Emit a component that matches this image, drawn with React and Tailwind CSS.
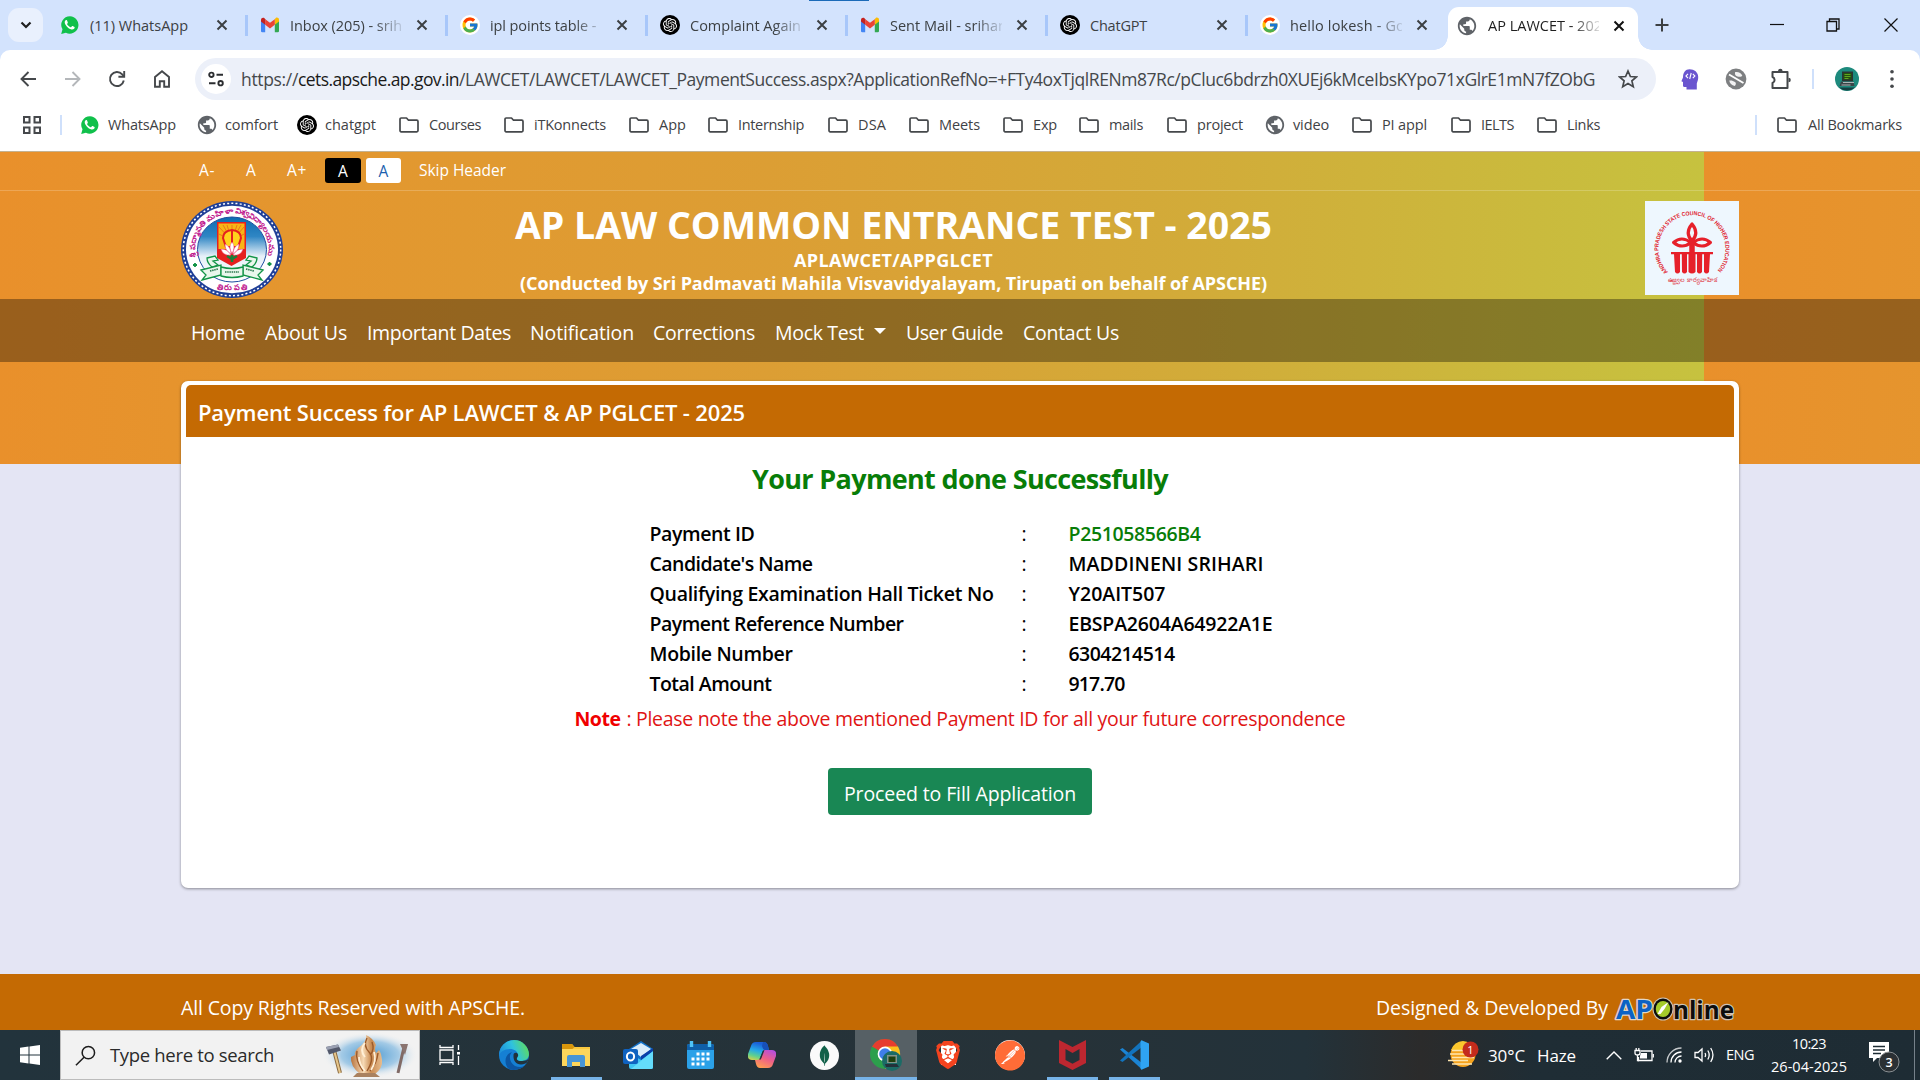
import React, { useLayoutEffect, useRef } from "react";
import { FcGoogle } from "react-icons/fc";
import { MdPublic } from "react-icons/md";
import { SiOpenai, SiBrave, SiPostman, SiMongodb } from "react-icons/si";

/* One line of text whose tracking is adjusted so that it fills `w` pixels. */
function Fit({ w, children, className = "" }) {
  const ref = useRef(null);
  useLayoutEffect(() => {
    const el = ref.current;
    el.style.letterSpacing = "0px";
    const natural = el.getBoundingClientRect().width;
    const n = el.textContent.length;
    el.style.letterSpacing = (w - natural) / n + "px";
  }, [w, children]);
  return (
    <span className={"block shrink-0 whitespace-nowrap " + className} style={{ width: w }}>
      <span ref={ref} className="inline-block whitespace-pre">{children}</span>
    </span>
  );
}

/* ---------- small icons ---------- */
function WhatsApp() {
  return (
    <svg viewBox="0 0 20 20" className="h-5 w-5">
      <path d="M10 1.2a8.7 8.7 0 0 0-7.5 13.1L1.2 18.9l4.7-1.2A8.7 8.7 0 1 0 10 1.2z" fill="#10c04b" />
      <path d="M7.1 5.5c-.2-.5-.4-.5-.7-.5-.7 0-1.7.8-1.7 2.2 0 2.2 3.4 6.6 6.8 7.2 1.600.3 2.9-.5 3.100-1.600.1-.5.1-.8-.1-.9l-1.900-.9c-.3-.1-.5-.1-.7.2l-.8 1c-.2.2-.4.2-.6.1-1.200-.5-2.600-1.600-3.400-3-.1-.3 0-.4.100-.5l.6-.8c.100-.2.100-.3 0-.5z" fill="#fff" />
    </svg>
  );
}
function Gmail() {
  return (
    <svg viewBox="0 0 20 16" className="h-4 w-5">
      <path d="M1 3v11a1.200 1.200 0 0 0 1.200 1.200h3V6z" fill="#4285f4" />
      <path d="M19 3v11a1.200 1.200 0 0 1-1.200 1.200h-3V6z" fill="#34a853" />
      <path d="M14.800 2.200V7.800L19 4.600V2.700c0-1.800-2-2.700-3.300-1.700z" fill="#fbbc04" />
      <path d="M5.200 7.800V2.200L10 5.800l4.800-3.600v5.600L10 11.400z" fill="#ea4335" />
      <path d="M1 2.700v1.900l4.200 3.200V2.200L4.300 1.100C2.900.1 1 1 1 2.700z" fill="#c5221f" />
    </svg>
  );
}
function OpenAI() {
  return (
    <span className="flex h-5 w-5 items-center justify-center rounded-full bg-black">
      <SiOpenai className="h-3.5 w-3.5 text-white" />
    </span>
  );
}
function Google() {
  return (
    <span className="flex h-5 w-5 items-center justify-center rounded-full bg-white">
      <FcGoogle className="h-[18px] w-[18px]" />
    </span>
  );
}
function Globe() {
  return <MdPublic className="h-[22px] w-[22px] shrink-0 text-[#5f6368]" />;
}
function Folder() {
  return (
    <svg viewBox="0 0 20 16" className="h-4 w-5" fill="none" stroke="#45484b" strokeWidth="1.700" strokeLinejoin="round">
      <path d="M1 2.200Q1 1 2.200 1H7.500L9.500 3.200H17.800Q19 3.200 19 4.400V13.600Q19 14.800 17.800 14.800H2.200Q1 14.800 1 13.600Z" />
    </svg>
  );
}
const GLYPHS = { wa: WhatsApp, gm: Gmail, ai: OpenAI, go: Google, gl: Globe, fo: Folder };
function Glyph({ kind }) {
  const G = GLYPHS[kind];
  return (
    <span className="flex h-5 w-5 shrink-0 items-center justify-center">
      <G />
    </span>
  );
}
function Cross({ color = "#3c4043" }) {
  return (
    <svg viewBox="0 0 12 12" className="h-3 w-3 shrink-0" stroke={color} strokeWidth="2">
      <path d="M1.500 1.500l9 9M10.500 1.500l-9 9" />
    </svg>
  );
}

/* ---------- tab strip ---------- */
const TABS = [
  ["wa", "(11) WhatsApp", 98, false],
  ["gm", "Inbox (205) - srih", 112, true],
  ["go", "ipl points table - ", 110, true],
  ["ai", "Complaint Again", 111, true],
  ["gm", "Sent Mail - srihar", 114, true],
  ["ai", "ChatGPT", 57, false],
  ["go", "hello lokesh - Go", 115, true],
];
const FADE = "[mask-image:linear-gradient(90deg,#000_75%,rgba(0,0,0,.15)_100%)]";

function TabStrip() {
  return (
    <div className="relative flex h-[50px] items-center bg-[#d3e3fd] text-[14.500px] text-[#3c4043]">
      <div className="absolute left-[809px] top-0 h-[1px] w-[60px] bg-[#1b6ab8]" />
      <div className="ml-2 flex h-[34px] w-[35px] items-center justify-center rounded-[11px] bg-[#e9f0fd]">
        <svg viewBox="0 0 12 8" className="h-2 w-3" fill="none" stroke="#1f1f1f" strokeWidth="2.200">
          <path d="M1.500 1.500L6 6l4.500-4.500" />
        </svg>
      </div>
      <div className="ml-[17px] flex">
        {TABS.map(([k, label, w, fade], i) => (
          <div key={i} className="flex h-6 w-[200px] items-center">
            <Glyph kind={k} />
            <div className={"ml-2.5 w-[112px] overflow-hidden pt-px " + (fade ? FADE : "")}>
              <Fit w={w}>{label}</Fit>
            </div>
            <div className="ml-[14px] flex"><Cross /></div>
            <div className={"ml-[17px] h-[21px] w-[2.500px] " + (i < 6 ? "bg-[#a8c7fa]" : "")} />
          </div>
        ))}
      </div>
      <div className="absolute bottom-0 left-[1448px] flex h-[43px] w-[190px] items-center rounded-t-[11px] bg-white pb-1.5 pl-[9px] text-[#1f1f1f]">
        <div className="absolute -left-[14px] bottom-0 h-[14px] w-[14px] bg-[radial-gradient(circle_at_0_0,#d3e3fd_13.500px,#fff_14px)]" />
        <div className="absolute -right-[14px] bottom-0 h-[14px] w-[14px] bg-[radial-gradient(circle_at_100%_0,#d3e3fd_13.500px,#fff_14px)]" />
        <Glyph kind="gl" />
        <div className={"ml-[11px] w-[111px] overflow-hidden pt-px " + FADE}>
          <Fit w={114}>AP LAWCET - 202</Fit>
        </div>
        <div className="ml-[14px] flex"><Cross color="#111" /></div>
      </div>
      <div className="ml-auto flex items-center pr-[22px]">
        <svg viewBox="0 0 14 14" className="h-[14px] w-[14px]" stroke="#3c4043" strokeWidth="2"><path d="M7 .5v13M.5 7h13" /></svg>
        <svg viewBox="0 0 14 14" className="ml-[101px] h-[14px] w-[14px]" stroke="#111" strokeWidth="1.200"><path d="M0 6.500h14" /></svg>
        <svg viewBox="0 0 14 14" className="ml-[42px] h-[14px] w-[14px]" fill="none" stroke="#111" strokeWidth="1.300">
          <path d="M1 3.500h9.500v9.500H1zM3.500 3.500V1H13v10h-2.500" />
        </svg>
        <svg viewBox="0 0 14 14" className="ml-[44px] h-[14px] w-[14px]" stroke="#111" strokeWidth="1.200"><path d="M.5.5l13 13M13.500.5l-13 13" /></svg>
      </div>
    </div>
  );
}

/* ---------- toolbar ---------- */
function Toolbar() {
  const line = { fill: "none", strokeWidth: 1.9 };
  return (
    <div className="flex h-[58px] items-center">
      <svg viewBox="0 0 16 16" className="ml-5 h-4 w-4" stroke="#45484b" {...line}><path d="M16 8H2M8.500 1L1.500 8l7 7" /></svg>
      <svg viewBox="0 0 16 16" className="ml-[29px] h-4 w-4" stroke="#b4b7ba" {...line}><path d="M0 8h14M7.500 1l7 7-7 7" /></svg>
      <svg viewBox="0 0 18 18" className="ml-[27px] h-[18px] w-[18px]" stroke="#45484b" {...line}>
        <path d="M15.800 10.500A7 7 0 1 1 14.200 4.400L16 6.500" /><path d="M16.200 1v5.800h-5.800" />
      </svg>
      <svg viewBox="0 0 18 18" className="ml-[27px] h-[18px] w-[18px]" stroke="#45484b" {...line}>
        <path d="M2 7L9 1.300 16 7v9.800h-4.800v-5.600H6.800v5.600H2z" />
      </svg>
      <div className="ml-6 flex h-[42px] w-[1461px] items-center rounded-full bg-[#ecf0f9]">
        <div className="ml-[6px] flex h-[30px] w-[30px] items-center justify-center rounded-full bg-white">
          <svg viewBox="0 0 16 16" className="h-4 w-4" fill="none" stroke="#2b2d30" strokeWidth="1.900">
            <circle cx="3.400" cy="3.800" r="2.200" /><path d="M8.500 3.800H15M1 12.200h6.500" /><circle cx="12.600" cy="12.200" r="2.200" />
          </svg>
        </div>
        <div className="ml-[10px] pt-px text-[17.500px] text-[#45484b]">
          <div className="flex">
            <Fit w={57}>https://</Fit>
            <Fit w={161} className="text-[#1a1a1a]">cets.apsche.ap.gov.in</Fit>
            <Fit w={1136}>/LAWCET/LAWCET/LAWCET_PaymentSuccess.aspx?ApplicationRefNo=+FTy4oxTjqlRENm87Rc/pCluc6bdrzh0XUEj6kMceIbsKYpo71xGlrE1mN7fZObG</Fit>
          </div>
        </div>
        <svg viewBox="0 0 20 20" className="ml-[23px] h-5 w-5" fill="none" stroke="#45484b" strokeWidth="1.700">
          <path d="M10 2l2.400 5.500 6 .5-4.500 3.900 1.400 5.800L10 14.600l-5.300 3.100 1.400-5.800L1.600 8l6-.5z" />
        </svg>
      </div>
      <svg viewBox="0 0 18 21" className="ml-[25px] h-[21px] w-[18px]">
        <path d="M8.500.3c5 0 8.500 3 8.700 7.400.1 3-.8 4.900-1.400 6.800v6H5.500v-2.600H3.200c-.9 0-1.200-.6-1.200-1.400v-3.400L.4 12.300 2 8.500C2 3.600 4.500.3 8.500.3z" fill="#6a55cf" />
        <path d="M7 4.800L4.900 7 7 9.200M11.800 4.800L13.900 7l-2.100 2.200M10.200 4L8.700 10" stroke="#fff" strokeWidth="1.100" fill="none" />
      </svg>
      <svg viewBox="0 0 22 22" className="ml-[26px] h-[22px] w-[22px]">
        <circle cx="11" cy="11" r="10.400" fill="#7d7f81" />
        <path d="M10 4.200c3-.8 6.500 1 7.300 3.600-1.300 1.400-3.300.9-4.800.6-1.600-.5-3-1.600-2.500-4.200zM4.300 12.500c2-.4 4.200.3 5.700 1.500 1.400 1 1 2.600-.2 4-3.200-.6-5.200-2.600-5.500-5.500z" fill="#fff" opacity=".9" />
        <path d="M4 6.500l14.500 8.500" stroke="#fff" strokeWidth="2" />
      </svg>
      <svg viewBox="0 0 22 22" className="ml-[23px] h-[22px] w-[22px]" fill="none" stroke="#45484b" strokeWidth="2" strokeLinejoin="round">
        <path d="M2.500 4H17.500V20H2.500v-5a3.200 3.200 0 0 0 0-6z" />
        <path d="M8 3a2.300 2.300 0 0 1 4.600 0zM18.500 9.700a2.300 2.300 0 0 1 0 4.600z" fill="#45484b" stroke="none" />
      </svg>
      <div className="ml-[20px] h-5 w-[2px] bg-[#cfe0fb]" />
      <svg viewBox="0 0 24 24" className="ml-[21px] h-6 w-6">
        <circle cx="12" cy="12" r="12" fill="#1d8a7d" />
        <path d="M7 4.500h11v9.500H7z" fill="#2b3433" /><path d="M8.500 6h8v6.500h-8z" fill="#24500f" />
        <path d="M9.500 7.500h6M9.500 9.500h6M9.500 11.500h4" stroke="#5ea61f" />
        <path d="M6 14.500h12.500l1 4.500H4.500z" fill="#3a4548" /><path d="M8 15.500h11M6.500 18h9" stroke="#aab4b4" />
        <path d="M4 20.500a12 12 0 0 0 16 0z" fill="#143f42" />
      </svg>
      <svg viewBox="0 0 4 22" className="ml-[31px] h-[20px] w-1" fill="#45484b">
        <circle cx="2" cy="3" r="2" /><circle cx="2" cy="11" r="2" /><circle cx="2" cy="19" r="2" />
      </svg>
    </div>
  );
}

/* kind, label, text width, cell width */
const MARKS = [
  ["wa", "WhatsApp", 68, 117], ["gl", "comfort", 53, 100], ["ai", "chatgpt", 51, 102],
  ["fo", "Courses", 52, 105], ["fo", "iTKonnects", 72, 125], ["fo", "App", 27, 79],
  ["fo", "Internship", 66, 120], ["fo", "DSA", 28, 81], ["fo", "Meets", 41, 94],
  ["fo", "Exp", 24, 76], ["fo", "mails", 34, 88], ["fo", "project", 46, 98],
  ["gl", "video", 36, 87], ["fo", "PI appl", 45, 99], ["fo", "IELTS", 33, 86], ["fo", "Links", 33, 60],
];
function Bookmarks() {
  return (
    <div className="flex h-[42px] items-center pb-[8px] text-[14.500px] text-[#3f4245]">
      <svg viewBox="0 0 18 18" className="ml-[23px] h-[18px] w-[18px]" fill="none" stroke="#45484b" strokeWidth="2">
        <path d="M1 1h5.500v5.500H1zM11.500 1H17v5.500h-5.500zM1 11.500h5.500V17H1zM11.500 11.500H17V17h-5.500z" />
      </svg>
      <div className="ml-[19px] h-5 w-[2px] bg-[#cfe0fb]" />
      <div className="ml-[18px] flex">
        {MARKS.map(([k, label, w, cell]) => (
          <div key={label} className="flex items-center" style={{ width: cell }}>
            <Glyph kind={k} />
            <Fit w={w} className={k === "fo" ? "ml-2.5" : "ml-2"}>{label}</Fit>
          </div>
        ))}
      </div>
      <div className="ml-auto h-5 w-[2px] bg-[#cfe0fb]" />
      <div className="ml-[20px] mr-[18px] flex items-center">
        <Glyph kind="fo" />
        <Fit w={94} className="ml-[11px]">All Bookmarks</Fit>
      </div>
    </div>
  );
}

/* ---------- site header ---------- */
function UniversityEmblem() {
  return (
    <svg viewBox="0 0 102 97" className="h-[97px] w-[102px]" preserveAspectRatio="none">
      <defs>
        <linearGradient id="sky" x1="0" y1="0" x2="0" y2="1">
          <stop offset="0" stopColor="#0d6bb0" /><stop offset=".3" stopColor="#2f86c4" /><stop offset=".6" stopColor="#e6f0f8" /><stop offset="1" stopColor="#fff" />
        </linearGradient>
        <path id="ringTop" d="M16 58.500A36.500 36 0 1 1 86 58.500" />
      </defs>
      <ellipse cx="51" cy="48.500" rx="51" ry="48.500" fill="#1f3f97" />
      <ellipse cx="51" cy="48.500" rx="48.700" ry="46.200" fill="none" stroke="#fff" strokeWidth="1.500" strokeDasharray="2 2.200" />
      <ellipse cx="51" cy="48.500" rx="46" ry="43.800" fill="#fff" />
      <ellipse cx="51" cy="48.500" rx="34.500" ry="32.500" fill="url(#sky)" stroke="#1f4fa0" strokeWidth="1" />
      <text fontSize="7.500" fontWeight="600" fill="#c0158d" fontFamily="Noto Sans, sans-serif">
        <textPath href="#ringTop" textLength="128" lengthAdjust="spacingAndGlyphs" startOffset="3">శ్రీ పద్మావతి మహిళా విశ్వవిద్యాలయము</textPath>
      </text>
      <text x="51" y="88.500" fontSize="8" fontWeight="600" textAnchor="middle" textLength="30" fill="#c0158d" fontFamily="Noto Sans, sans-serif">తిరుపతి</text>
      <path d="M36 21h29v36L50.500 65 36 57z" fill="#e5201f" />
      <path d="M37.500 22.500h26V48h-26z" fill="#f8b616" />
      <g stroke="#e9671c" strokeWidth=".8">
        <path d="M51 40L38 26M51 40L42 24M51 40L46 24M51 40V24M51 40l5-16M51 40l9-16M51 40l12-14M51 40l12-7M51 40l-13-7" />
      </g>
      <path d="M42 37Q42 30 51 29Q60 30 60 37L57 46H45z" fill="#ffd21c" stroke="#e5201f" strokeWidth="2" />
      <path d="M51 30v15" stroke="#e5201f" strokeWidth="2" />
      <path d="M51 41q4 4 0 12q-4-8 0-12zM44 43q6 3 6 10q-6-3-6-10zM58 43q-6 3-6 10q6-3 6-10zM40 48q7 0 10 6q-8 1-10-6zM62 48q-7 0-10 6q8 1 10-6z" fill="#fff" stroke="#e58" strokeWidth=".5" />
      <path d="M51 54v7M46 55l5 3 5-3" stroke="#18813d" strokeWidth="2.500" fill="none" />
      <g fill="#e9f7ec" stroke="#139447" strokeWidth="1.300">
        <path d="M26 57l8-2 3 4-5 1 5 4-6 2q-5-4-5-9zM76 57l-8-2-3 4 5 1-5 4 6 2q5-4 5-9z" />
        <path d="M20 69l20-5v10l-19 5 4-5zM82 69l-20-5v10l19 5-4-5z" />
        <path d="M40 66q11 3 22 0v9q-11 3-22 0z" />
      </g>
      <path d="M29 70l8-2M44 71h14M65 68l8 2" stroke="#2d7a50" strokeWidth="1.600" strokeDasharray="1.500 .7" />
      <path d="M12 64h4M14 62v4M86.500 63h4M88.500 61v4" stroke="#139447" strokeWidth="1.800" />
    </svg>
  );
}

function CouncilLogo() {
  return (
    <svg viewBox="0 0 94 94" className="h-[94px] w-[94px] bg-[#eef7fe]">
      <defs><path id="arc" d="M23 71A33.500 33.500 0 1 1 71 71" /></defs>
      <text fontSize="5.800" fontWeight="700" fill="#e0202b" fontFamily="Liberation Sans, Arial, sans-serif">
        <textPath href="#arc" textLength="154" lengthAdjust="spacingAndGlyphs">ANDHRA PRADESH STATE COUNCIL OF HIGHER EDUCATION</textPath>
      </text>
      <g fill="none" stroke="#e6202a" strokeWidth="3" strokeLinejoin="round">
        <path d="M47 23q-7.500 9 0 17q7.500-8 0-17z" strokeWidth="3.200" />
        <path d="M28.500 41.500q8-7 17.500 0q-9 7-17.500 0zM65.500 41.500q-8-7-17.500 0q9 7 17.500 0z" />
        <path d="M47 37v15" strokeWidth="5.500" />
      </g>
      <path d="M26 51h42v2.200H26z" fill="#e6202a" />
      <path d="M29 53h6v18q-2.500 3-5 0zM36.800 53h5.200v18q-2.500 3-5 0zM43.500 53h7v18q-3.500 3-7 0zM52 53h5.200l-.2 18q-2.500 3-5 0zM59 53h6l-1 18q-2.500 3-5 0z" fill="#e6202a" />
      <text x="47" y="81" fontSize="6.500" textAnchor="middle" textLength="49" lengthAdjust="spacingAndGlyphs" fill="#e0404a" fontFamily="Noto Sans, sans-serif">ఉజ్జ్వల కార్యవాహిక</text>
    </svg>
  );
}

const NAV = [
  ["Home", 54, 20], ["About Us", 82, 20], ["Important Dates", 144, 19], ["Notification", 104, 19],
  ["Corrections", 102, 20], ["Mock Test", 89, 42], ["User Guide", 97, 20], ["Contact Us", 96, 0],
];

function SiteHeader() {
  return (
    <header className="text-white">
      <div className="flex h-[40px] items-center border-y border-t-[#c4b291] border-b-white/20 pb-[1px] pl-[199px] text-[15.500px]">
        <Fit w={16}>A-</Fit>
        <Fit w={11} className="ml-[31px]">A</Fit>
        <Fit w={20} className="ml-[30px]">A+</Fit>
        <div className="ml-[18px] flex h-[25px] w-[36px] items-center justify-center rounded-[3px] bg-black pt-0.5">A</div>
        <div className="ml-[5px] flex h-[25px] w-[35px] items-center justify-center rounded-[3px] bg-white pt-0.5 text-[#1b5fae]">A</div>
        <Fit w={87} className="ml-[18px]">Skip Header</Fit>
      </div>
      <div className="flex h-[108px] items-start px-[181px] pt-[10px]">
        <UniversityEmblem />
        <div className="ml-[232px] flex flex-col items-center font-bold">
          <Fit w={757} className="mt-[1px] text-[37.500px] leading-[46px]">AP LAW COMMON ENTRANCE TEST - 2025</Fit>
          <Fit w={199} className="text-[18px] leading-[24px]">APLAWCET/APPGLCET</Fit>
          <Fit w={747} className="text-[18px] leading-[23px]">(Conducted by Sri Padmavati Mahila Visvavidyalayam, Tirupati on behalf of APSCHE)</Fit>
        </div>
        <div className="ml-auto"><CouncilLogo /></div>
      </div>
      <nav className="flex h-[63px] items-center bg-black/[.34] pl-[191px] pt-[4px] text-[19.500px]">
        {NAV.map(([label, w, gap]) => (
          <div key={label} className="flex items-center" style={{ width: w + gap }}>
            <Fit w={w}>{label}</Fit>
            {label === "Mock Test" && <span className="-mt-1 ml-[10px] border-x-[6px] border-t-[6px] border-x-transparent border-t-white" />}
          </div>
        ))}
      </nav>
    </header>
  );
}

/* ---------- payment card ---------- */
const ROWS = [
  ["Payment ID", 105, "P251058566B4", 132],
  ["Candidate's Name", 163, "MADDINENI SRIHARI", 195],
  ["Qualifying Examination Hall Ticket No", 344, "Y20AIT507", 97],
  ["Payment Reference Number", 254, "EBSPA2604A64922A1E", 204],
  ["Mobile Number", 143, "6304214514", 106],
  ["Total Amount", 122, "917.70", 56],
];

function PaymentCard() {
  return (
    <main className="mx-[181px] mt-[19px] flex h-[507px] flex-col items-center rounded-[7px] bg-white px-[5px] pt-[4px] shadow-[0_1px_3px_rgba(0,0,0,.4)]">
      <div className="flex h-[52px] w-full items-center rounded-t-[5px] bg-[#c46a03] pl-[12px] pt-[3px] text-[22px] font-semibold text-white">
        <Fit w={547}>Payment Success for AP LAWCET &amp; AP PGLCET - 2025</Fit>
      </div>
      <Fit w={416} className="mt-[22px] text-[27px] font-bold leading-[40px] text-[#087d08]">Your Payment done Successfully</Fit>
      <div className="mt-[20px] w-[621px] text-[19.500px] leading-[30px] text-black">
        {ROWS.map(([label, w, value, vw], i) => (
          <div key={label} className="grid h-[30px] grid-cols-[372px_47px_1fr]">
            <Fit w={w} className="font-semibold">{label}</Fit>
            <span>:</span>
            <Fit w={vw} className={i === 0 ? "font-semibold text-[#087d08]" : "font-semibold"}>{value}</Fit>
          </div>
        ))}
      </div>
      <div className="mt-[5px] flex text-[19.500px] leading-[30px] text-[#e01414]">
        <Fit w={46} className="font-bold text-[#f00000]">Note</Fit>
        <Fit w={719} className="ml-[6px]">: Please note the above mentioned Payment ID for all your future correspondence</Fit>
      </div>
      <button className="mt-[34px] flex h-[47px] w-[264px] items-center justify-center rounded-[4px] bg-[#198754] pt-[4px] text-[19.500px] text-white">
        <Fit w={232}>Proceed to Fill Application</Fit>
      </button>
    </main>
  );
}

function Footer() {
  return (
    <footer className="mt-[86px] flex h-[56px] items-center bg-[#c46a03] px-[181px] pt-[11px] text-[19.500px] text-white">
      <Fit w={344}>All Copy Rights Reserved with APSCHE.</Fit>
      <Fit w={232} className="ml-auto">Designed &amp; Developed By</Fit>
      <svg viewBox="0 0 126 30" className="ml-[5px] mt-[2px] h-[30px] w-[126px]" fontFamily="Open Sans, sans-serif" fontWeight="700" paintOrder="stroke" strokeLinejoin="round">
        <text x="3" y="25" fontSize="27" textLength="37" lengthAdjust="spacingAndGlyphs" fill="#0c62c4" stroke="#e2d6c8" strokeWidth="2.500">AP</text>
        <text x="60" y="24.500" fontSize="25" textLength="61" lengthAdjust="spacingAndGlyphs" fill="#0d0d0d" stroke="#cfc3b4" strokeWidth="2.500">nline</text>
        <ellipse cx="50" cy="15" rx="10.500" ry="11.500" fill="#cfc3b4" />
        <ellipse cx="50" cy="15" rx="9.500" ry="10.500" fill="#0d0d0d" />
        <ellipse cx="50" cy="15" rx="7.200" ry="8" fill="#a5cb2b" />
        <path d="M44.500 20l4-7 7-5-4 7-4 5z" fill="#fff" />
      </svg>
    </footer>
  );
}

/* ---------- taskbar ---------- */
function SearchArt() {
  return (
    <svg viewBox="0 0 96 47" className="ml-auto h-[47px] w-[96px]">
      <defs>
        <radialGradient id="glow"><stop offset="0" stopColor="#4d9ad2" /><stop offset=".6" stopColor="#a3cae6" /><stop offset="1" stopColor="#f2f2f2" stopOpacity="0" /></radialGradient>
        <linearGradient id="wood"><stop offset="0" stopColor="#b8733d" /><stop offset=".4" stopColor="#f6d9b4" /><stop offset=".65" stopColor="#c98b52" /><stop offset="1" stopColor="#e8bd8e" /></linearGradient>
      </defs>
      <ellipse cx="47" cy="23" rx="48" ry="23" fill="url(#glow)" />
      <path d="M11 18l6 23" stroke="#8a6a40" strokeWidth="4" /><path d="M11 18l6 23" stroke="#e6c68b" strokeWidth="2" />
      <path d="M3 15l12-2.500 3 6-12 4z" fill="#52586b" /><path d="M3 15l12-2.500 1 2.500-12 3z" fill="#9aa0b2" />
      <path d="M81 15l-6 26" stroke="#806a66" strokeWidth="3" /><path d="M77 12h8l-3 11z" fill="#8a7470" />
      <path d="M43 3q2 6-8 13q-4 4-3 7l-4 2q-1 9 9 17h15q8-6 7-14q-1-8-3-10l-3 3q-2-4 0-8q-3-7-10-10z" fill="url(#wood)" />
      <path d="M44 6q-4 8 2 14t-2 19M34 19q-2 9 6 20M55 21q-1 10-8 18M49 10q3 8-2 13" stroke="#9b5a2a" strokeWidth="1.400" fill="none" />
      <path d="M42 11q-6 7 0 14M36 25q0 7 6 14M51 20q3 9-3 18" stroke="#fff0d8" strokeWidth="1.800" fill="none" />
      <path d="M34 41h18l5 4H30z" fill="#a9815f" />
    </svg>
  );
}

const Edge = () => (
  <svg viewBox="0 0 30 30" className="h-[30px] w-[30px]">
    <defs>
      <linearGradient id="e1" x1="0" y1=".6" x2="1" y2=".3"><stop offset="0" stopColor="#1b8bd8" /><stop offset=".5" stopColor="#2fc2df" /><stop offset="1" stopColor="#62dd56" /></linearGradient>
      <clipPath id="edgeDisc"><circle cx="15" cy="15" r="15" /></clipPath>
    </defs>
    <g clipPath="url(#edgeDisc)">
      <path d="M0 0h30v30H0z" fill="#1580d4" />
      <path d="M13 12c-4 4-2 11 3 14 5 2 10 1 13-3v8H12C4 26 5 14 13 12z" fill="#0c56a3" />
      <path d="M0 14C0 4 6 0 15 0h15v14c0 4-3 7-8 7-4 0-5-2-3.500-4C20 12 16 9 11 9 5 9 1 12 0 16z" fill="url(#e1)" />
      <path d="M14.500 15c0-2 2-2.800 3.500-2 1.500 1 1.500 3 .5 4-1.500 2-.5 4 3.500 4 4 0 8-1 8-4v4c-2 2-5 3.500-8 3.500-5 0-8-4-7.500-9.500z" fill="#22323b" />
    </g>
  </svg>
);
const Explorer = () => (
  <svg viewBox="0 0 28 24" className="h-6 w-7">
    <path d="M0 1h10l2.500 3H28v19H0z" fill="#f9c83f" /><path d="M0 1h10l2.500 3-2 2H0z" fill="#d8960c" />
    <path d="M0 6h28v17H0z" fill="#fdd65b" /><path d="M5 14q0-2 2-2h14q2 0 2 2v10h-5v-5h-8v5H5z" fill="#4795d6" />
  </svg>
);
const Outlook = () => (
  <svg viewBox="0 0 30 28" className="h-7 w-[30px]">
    <path d="M6 8L18 0l12 8v18q0 2-2 2H8z" fill="#1271c8" /><path d="M8 8l10-6 10 6-10 8z" fill="#d9ecfa" />
    <path d="M6 12l12 7 12-9v16q0 2-2 2H8q-2 0-2-2z" fill="#3fc4f2" /><path d="M30 10L8 28h20q2 0 2-2z" fill="#64dcfb" /><path d="M18 19L30 10v-3l-12 8z" fill="#0a3fa8" />
    <rect y="8" width="15" height="15" rx="2" fill="#0f62c0" /><ellipse cx="7.500" cy="15.500" rx="3.600" ry="4" fill="none" stroke="#fff" strokeWidth="2" />
  </svg>
);
const Calendar = () => (
  <svg viewBox="0 0 27 28" className="h-7 w-[27px]">
    <rect y="3" width="27" height="25" rx="2" fill="#2ba1e8" /><path d="M0 5q0-2 2-2h23q2 0 2 2v4H0z" fill="#0f5fa8" />
    <path d="M4.500 0v6M22.500 0v6" stroke="#4fc3f7" strokeWidth="3.400" />
    <g fill="#fff">
      <path d="M9.500 11.500h3v3h-3zM14.500 11.500h3v3h-3zM19.500 11.500h3v3h-3zM4.500 16.500h3v3h-3zM9.500 16.500h3v3h-3zM14.500 16.500h3v3h-3zM19.500 16.500h3v3h-3zM4.500 21.500h3v3h-3zM9.500 21.500h3v3h-3zM14.500 21.500h3v3h-3z" />
    </g>
  </svg>
);
const Copilot = () => (
  <svg viewBox="0 0 28 26" className="h-[26px] w-7">
    <defs>
      <linearGradient id="c1" x1=".3" y1="0" x2="0" y2="1"><stop offset="0" stopColor="#1a5fd8" /><stop offset=".4" stopColor="#25a9e8" /><stop offset=".7" stopColor="#5fd08f" /><stop offset="1" stopColor="#ecd23f" /></linearGradient>
      <linearGradient id="c2" x1=".8" y1="0" x2=".3" y2="1"><stop offset="0" stopColor="#b44ee0" /><stop offset=".5" stopColor="#ee6088" /><stop offset="1" stopColor="#ff9c52" /></linearGradient>
    </defs>
    <path d="M8 0h8q3 0 4 4l1 4h-4q-2 0-3 3l-3 7H4q-5 0-4-6L3 4q1-4 5-4z" fill="url(#c1)" />
    <path d="M20 26h-8q-3 0-4-4l-1-4h3q2 0 3-3l3-7h8q5 0 4 6l-3 8q-1 4-5 4z" fill="url(#c2)" />
    <path d="M11.500 18l3-8.500q.5-1.500 2-1.500L13.500 16q-.8 2-2 2z" fill="#22323b" />
    <path d="M15 0h1q3 0 4 4l1 4h-4q-2 0-3-4z" fill="#1750b8" />
  </svg>
);
const Mongo = () => (
  <span className="flex h-[29px] w-[29px] items-center justify-center rounded-full bg-[#fafafa]">
    <SiMongodb className="h-[21px] w-[21px] text-[#116149]" />
  </span>
);
const Chrome = () => (
  <svg viewBox="0 0 32 32" className="h-8 w-8">
    <circle cx="15" cy="15" r="15" fill="#2c9f4c" />
    <path d="M15 15L2 7.500A15 15 0 0 1 28 7.500z" fill="#e63c2f" /><path d="M15 7.500h13A15 15 0 0 1 15 30l6.500-11z" fill="#fbc01c" />
    <circle cx="15" cy="15" r="7.400" fill="#fff" /><circle cx="15" cy="15" r="5.800" fill="#3f7ee8" />
    <circle cx="22" cy="22" r="10" fill="#1b6b66" /><path d="M17 16h10v8H17z" fill="#81938b" /><path d="M18.500 17.500h7v5.500h-7z" fill="#20400e" /><path d="M15 25h12l2 3H16z" fill="#24313a" />
  </svg>
);
const Brave = () => (
  <span className="relative flex h-[30px] w-[28px] items-center justify-center">
    <span className="absolute h-[20px] w-[15px] bg-white" />
    <SiBrave className="relative h-[30px] w-[30px] text-[#f4431f]" />
  </span>
);
const Postman = () => (
  <span className="flex h-[30px] w-[30px] items-center justify-center rounded-full bg-white">
    <SiPostman className="h-[31px] w-[31px] text-[#ff6c37]" />
  </span>
);
const McAfee = () => (
  <svg viewBox="0 0 27 30" className="h-[30px] w-[27px]">
    <path d="M0 0l13.500 7L27 0v23l-13.500 7L0 23zM6.500 9v11l7 3.800 7-3.800V9l-7 4z" fill="#bd2730" fillRule="evenodd" />
  </svg>
);
const VsCode = () => (
  <svg viewBox="0 0 30 30" className="h-[30px] w-[30px]">
    <path d="M1 9.500L3.500 8 23 23v6.500z" fill="#1b84d4" /><path d="M1 20.500L3.500 22 23 7V.5z" fill="#1273bc" />
    <path d="M22.500.3L30 3.500v23l-7.500 3.200q-1-.5-1-1.700V2q0-1.200 1-1.700z" fill="#2fa4f2" />
  </svg>
);
const APPS = [
  [Edge, ""], [Explorer, "open"], [Outlook, ""], [Calendar, ""], [Copilot, ""], [Mongo, ""],
  [Chrome, "active"], [Brave, ""], [Postman, ""], [McAfee, "open"], [VsCode, "open"],
];

function Taskbar() {
  return (
    <div className="flex h-[50px] items-center bg-[linear-gradient(90deg,#22333c_0,#263238_55%,#23323a_68%,#2b2b2b_74%,#1f2d35_80%,#1e2c34_100%)] text-white">
      <svg viewBox="0 0 20 20" className="ml-5 h-5 w-5" fill="#fff">
        <path d="M0 2.800L8.500 1.600v7.900H0zM9.500 1.400L20 0v9.500H9.500zM0 10.500h8.500v7.900L0 17.200zM9.500 10.500H20V20L9.500 18.600z" />
      </svg>
      <div className="ml-5 flex h-[50px] w-[360px] items-center border border-[#bcbcbc] bg-[#f2f2f2] text-[#2a2a2a]">
        <svg viewBox="0 0 22 22" className="ml-[14px] h-[21px] w-[21px]" fill="none" stroke="#1d1d1d" strokeWidth="1.600"><circle cx="14" cy="8" r="6.500" /><path d="M9.500 12.800L1 21.300" /></svg>
        <Fit w={164} className="ml-[14px] text-[18.500px]">Type here to search</Fit>
        <SearchArt />
      </div>
      <svg viewBox="0 0 22 20" className="ml-[19px] h-5 w-[22px]" fill="none" stroke="#fff" strokeWidth="1.300">
        <path d="M1 5h13v10H1zM1 0v2.500h13V0M1 20v-2.500h13V20M19.500 0v5M19.500 11v9" /><path d="M18 7h3v2.500h-3z" fill="#fff" stroke="none" />
      </svg>
      <div className="ml-[22px] flex">
        {APPS.map(([Icon, state], i) => (
          <div key={i} className={"flex h-[50px] w-[62px] flex-col items-center " + (state === "active" ? "bg-[#566065]" : "")}>
            <div className="flex h-[47px] items-center pt-[3px]"><Icon /></div>
            {state && <div className={"h-[3px] bg-[#76b3e8] " + (state === "active" ? "w-[62px]" : "w-[51px]")} />}
          </div>
        ))}
      </div>
      <div className="ml-auto flex items-center">
        <svg viewBox="0 0 31 28" className="h-7 w-[31px]">
          <circle cx="15" cy="13.500" r="12.500" fill="#f5a21c" /><path d="M3 9A12.500 12.500 0 0 1 27 9z" fill="#fbc62d" />
          <path d="M4 9.500h12M2 13h19M4 16.500h22M0 19.500h20M4 23h20" stroke="#ffe6ae" strokeWidth="1.400" />
          <circle cx="22.500" cy="8.500" r="8" fill="#c42b1c" /><text x="22.500" y="12.500" fontSize="11" textAnchor="middle" fill="#fff" fontFamily="Open Sans, sans-serif">1</text>
        </svg>
        <Fit w={37} className="ml-[9px] pt-px text-[17px]">30°C</Fit>
        <Fit w={39} className="ml-[12px] pt-px text-[17px]">Haze</Fit>
        <svg viewBox="0 0 16 9" className="ml-[30px] h-[9px] w-4" fill="none" stroke="#fff" strokeWidth="1.400"><path d="M.7 8.300L8 1l7.300 7.300" /></svg>
        <svg viewBox="0 0 20 14" className="ml-[12px] h-[14px] w-5" fill="none" stroke="#fff" strokeWidth="1.300">
          <path d="M7 3h11v9.500H4.500V9" /><path d="M7 5h6v5.500H6V8z" fill="#fff" stroke="none" /><path d="M19.300 6v3.500M1 2.500h5v2.500q0 2-2.500 2T1 5zM2.200 0v2.500M4.800 0v2.500M3.500 7v5.500H5" />
        </svg>
        <svg viewBox="0 0 18 16" className="ml-[12px] h-4 w-[18px]" fill="none" stroke="#fff" strokeWidth="1.300">
          <path d="M1 15.500A14.500 14.500 0 0 1 15.500 1" opacity=".75" /><path d="M5 15.500A10.500 10.500 0 0 1 15.500 5M9 15.500A6.500 6.500 0 0 1 15.500 9" /><circle cx="14" cy="14" r="1.700" fill="#fff" stroke="none" />
        </svg>
        <svg viewBox="0 0 21 16" className="ml-[10px] h-4 w-[21px]" fill="none" stroke="#fff" strokeWidth="1.300">
          <path d="M1 5.500h3L8 2v12L4 10.500H1z" /><path d="M11 6q1.200 2 0 4M13.800 3.500q2.800 4.500 0 9M16.700 1q4.500 7 0 14" />
        </svg>
        <Fit w={28} className="ml-[11px] text-[14.500px]">ENG</Fit>
        <div className="ml-[17px] flex w-[76px] flex-col items-center text-[14.500px] leading-[23px]">
          <Fit w={34}>10:23</Fit>
          <Fit w={76}>26-04-2025</Fit>
        </div>
        <svg viewBox="0 0 32 32" className="ml-[21px] mt-[3px] h-8 w-8">
          <path d="M1 1h20v16H9l-4 4v-4H1z" fill="#fff" /><path d="M5 5.500h12M5 9h12M5 12.500h8" stroke="#1e2c34" strokeWidth="1.500" />
          <circle cx="21" cy="21" r="10" fill="#2b3034" stroke="#8b9093" strokeWidth="1" />
          <text x="21" y="25.500" fontSize="12.500" fontWeight="600" textAnchor="middle" fill="#fff" fontFamily="Open Sans, sans-serif">3</text>
        </svg>
        <div className="ml-[14px] mr-[5px] h-[50px] w-px bg-[#76818a]" />
      </div>
    </div>
  );
}

export default function App() {
  return (
    <div className="h-[1080px] w-[1920px] overflow-hidden bg-[#e4e5f4] font-['Open_Sans','Noto_Sans',sans-serif]">
      <TabStrip />
      <div className="bg-[#d3e3fd]">
        <div className="h-[101px] rounded-t-[10px] bg-white">
          <Toolbar />
          <Bookmarks />
        </div>
      </div>
      <div className="h-[879px] bg-[linear-gradient(90deg,#e9902b_0,#e3972f_20%,#dc9e34_45%,#d2ab39_70%,#c6c23f_100%)] bg-[length:1704px_313px] bg-repeat-x">
        <SiteHeader />
        <PaymentCard />
        <Footer />
      </div>
      <Taskbar />
    </div>
  );
}
